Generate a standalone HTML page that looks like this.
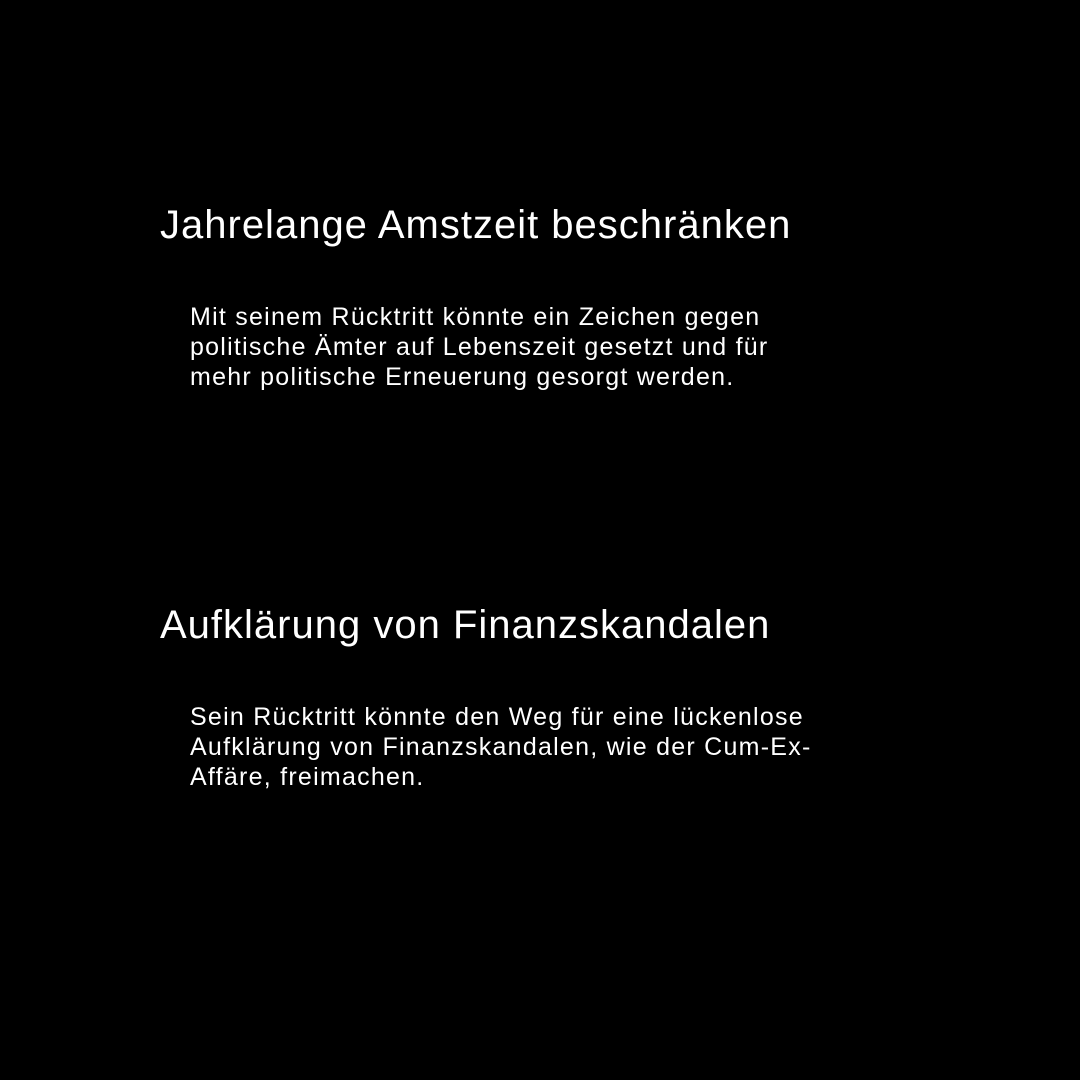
<!DOCTYPE html>
<html><head><meta charset="utf-8"><style>
html,body{margin:0;padding:0;background:#000;width:1080px;height:1080px;overflow:hidden}
body{position:relative;font-family:"Liberation Sans",sans-serif;color:#fff}
h2{position:absolute;left:160px;margin:0;font-weight:normal;font-size:40px;line-height:48px;white-space:nowrap;letter-spacing:1px}
p{position:absolute;left:190px;margin:0;font-size:25px;line-height:30px;width:700px;letter-spacing:1.25px;white-space:nowrap}
</style></head><body>
<h2 style="top:201px">Jahrelange Amstzeit beschränken</h2>
<p style="top:302px">Mit seinem Rücktritt könnte ein Zeichen gegen<br>politische Ämter auf Lebenszeit gesetzt und für<br>mehr politische Erneuerung gesorgt werden.</p>
<h2 style="top:601px">Aufklärung von Finanzskandalen</h2>
<p style="top:702px">Sein Rücktritt könnte den Weg für eine lückenlose<br>Aufklärung von Finanzskandalen, wie der Cum-Ex-<br>Affäre, freimachen.</p>
</body></html>
